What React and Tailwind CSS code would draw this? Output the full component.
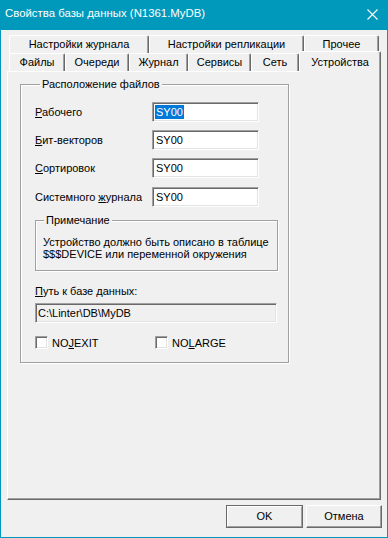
import React from "react";

function Tab({ w, children }) {
  return (
    <div
      className={`${w} h-[18px] flex items-center justify-center border-t border-l border-r border-t-white border-l-white border-r-[#696969] shadow-[inset_-1px_0_0_#a0a0a0] rounded-t-[2px] whitespace-nowrap`}
    >
      {children}
    </div>
  );
}

function Sunken({ className, children }) {
  return (
    <div
      className={`border border-t-[#a0a0a0] border-l-[#a0a0a0] border-b-white border-r-white shadow-[inset_1px_1px_0_#696969,inset_-1px_-1px_0_#e3e3e3] ${className}`}
    >
      {children}
    </div>
  );
}

function Field({ label, selected }) {
  return (
    <div className="flex items-center h-[20px]">
      <div className="w-[117px] whitespace-nowrap">{label}</div>
      <Sunken className="w-[107px] h-[20px] bg-white flex items-center pl-[2px]">
        {selected ? (
          <span className="bg-[#0078d7] text-white leading-[14px] px-px">SY00</span>
        ) : (
          <span className="leading-[14px] px-px">SY00</span>
        )}
      </Sunken>
    </div>
  );
}

export default function App() {
  return (
    <div className="w-[388px] h-[538px] flex flex-col bg-[#f0f0f0] font-['Liberation_Sans',Arial,sans-serif] text-[11px] text-black">
      <div className="h-[30px] shrink-0 bg-[#0099bc] flex items-center justify-between pl-[5px] pr-[10px]">
        <span className="text-white text-[11.4px] font-['Liberation_Sans',Arial,sans-serif] pb-[2px]">
          Свойства базы данных (N1361.MyDB)
        </span>
        <svg width="11" height="11" viewBox="0 0 11 11" className="mb-[2px]">
          <path d="M0.5 0.5 L10.5 10.5 M10.5 0.5 L0.5 10.5" stroke="white" strokeWidth="1.1" fill="none" />
        </svg>
      </div>
      <div className="flex-1 flex flex-col border-x border-b border-[#0099bc] px-[6px] pt-[5px]">
        <div className="flex ml-[2px] h-[18px]">
          <Tab w="w-[140px]">Настройки журнала</Tab>
          <Tab w="w-[155px]">Настройки репликации</Tab>
          <Tab w="w-[75px]">Прочее</Tab>
        </div>
        <div className="flex ml-[2px] h-[18px] items-end">
          <Tab w="w-[56px]">Файлы</Tab>
          <Tab w="w-[64px]">Очереди</Tab>
          <Tab w="w-[59px]">Журнал</Tab>
          <Tab w="w-[63px]">Сервисы</Tab>
          <Tab w="w-[48px]">Сеть</Tab>
          <div className="w-[82px] h-[21px] mb-[-1px] relative z-10 bg-[#f0f0f0] flex items-start justify-center pt-[2px] border-t border-l border-r border-t-white border-l-white border-r-[#696969] shadow-[inset_-1px_0_0_#a0a0a0] rounded-t-[2px] whitespace-nowrap">
            Устройства
          </div>
        </div>
        <div className="h-[429px] shrink-0 border border-t-white border-l-white border-r-[#696969] border-b-[#696969] shadow-[inset_-1px_-1px_0_#a0a0a0] pl-[12px] pt-[12px]">
          <div className="w-[269px] h-[279px] border border-[#a0a0a0] shadow-[inset_1px_1px_0_#fff,1px_1px_0_#fff] flex flex-col pl-[14px]">
            <span className="-mt-[8px] ml-[5px] self-start bg-[#f0f0f0] px-[2px] leading-[14px]">
              Расположение файлов
            </span>
            <div className="flex flex-col gap-[8px] mt-[11px]">
              <Field label={<><u>Р</u>абочего</>} selected />
              <Field label={<><u>Б</u>ит-векторов</>} />
              <Field label={<><u>С</u>ортировок</>} />
              <div className="mt-[1px]">
                <Field label={<>Системного <u>ж</u>урнала</>} />
              </div>
            </div>
            <div className="mt-[13px] w-[243px] h-[51px] border border-[#a0a0a0] shadow-[inset_1px_1px_0_#fff,1px_1px_0_#fff] flex flex-col pl-[7px]">
              <span className="-mt-[8px] ml-[1px] self-start bg-[#f0f0f0] px-[2px] leading-[14px]">
                Примечание
              </span>
              <div className="mt-[9px] leading-[12px] whitespace-nowrap">
                <div>Устройство должно быть описано в таблице</div>
                <div>$$$DEVICE или переменной окружения</div>
              </div>
            </div>
            <div className="mt-[13px] leading-[14px]">
              <u>П</u>уть к базе данных:
            </div>
            <Sunken className="mt-[5px] w-[242px] h-[20px] flex items-center pl-[2px]">
              C:\Linter\DB\MyDB
            </Sunken>
            <div className="mt-[13px] flex items-center h-[13px]">
              <div className="w-[120px] flex items-center">
                <Sunken className="w-[13px] h-[13px] bg-white" />
                <span className="ml-[4px] leading-[14px]">
                  NO<u>J</u>EXIT
                </span>
              </div>
              <div className="flex items-center">
                <Sunken className="w-[13px] h-[13px] bg-white" />
                <span className="ml-[4px] leading-[14px]">
                  NO<u>L</u>ARGE
                </span>
              </div>
            </div>
          </div>
        </div>
        <div className="mt-[5px] flex justify-end gap-[3px] -mr-px">
          <div className="w-[77px] h-[23px] border border-[#696969] flex">
            <div className="flex-1 flex items-center justify-center border border-t-white border-l-white border-r-[#a0a0a0] border-b-[#a0a0a0]">
              OK
            </div>
          </div>
          <div className="w-[76px] h-[23px] flex items-center justify-center border border-t-white border-l-white border-r-[#696969] border-b-[#696969] shadow-[inset_-1px_-1px_0_#a0a0a0]">
            Отмена
          </div>
        </div>
      </div>
    </div>
  );
}
